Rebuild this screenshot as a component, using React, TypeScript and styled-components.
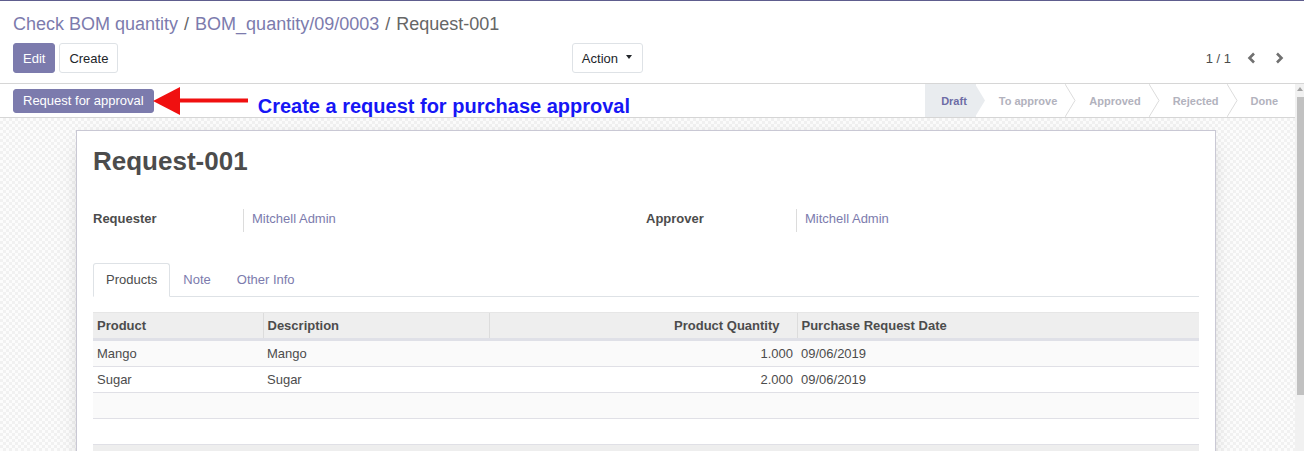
import React from "react";
import styled, { createGlobalStyle } from "styled-components";

const PRIMARY = "#7c7bad";
const TEXT = "#4c4c4c";

const GlobalStyle = createGlobalStyle`
  html, body, #root { height: 100%; margin: 0; padding: 0; }
  body {
    overflow: hidden;
    font-family: "Liberation Sans", Arial, Helvetica, sans-serif;
    font-size: 13px;
    color: ${TEXT};
    background: #fff;
  }
  * { box-sizing: border-box; }
`;

const Page = styled.div`
  height: 100vh;
  display: flex;
  flex-direction: column;
  border-top: 1px solid #5e5d8e;
`;

const ControlPanel = styled.div`
  flex: none;
  padding: 11px 0 10px;
  border-bottom: 1px solid #d6d6d6;
  background: #fff;
`;

const Breadcrumb = styled.ol`
  display: flex;
  margin: 0 0 7px;
  padding: 0 0 0 13px;
  list-style: none;
  font-size: 18px;
  line-height: 24px;
`;

const Crumb = styled.li<{ $active?: boolean }>`
  color: ${(p) => (p.$active ? "#666" : PRIMARY)};
  &:not(:first-child)::before {
    content: "/";
    color: #666;
    padding: 0 6px;
  }
`;

const ButtonsRow = styled.div`
  display: flex;
  height: 30px;
`;

const LeftHalf = styled.div`
  flex: 0 0 50%;
  display: flex;
  gap: 4px;
  padding: 0 9px 0 13px;
`;

const RightHalf = styled.div`
  flex: 1;
  display: flex;
  justify-content: flex-end;
  align-items: center;
  padding-right: 11px;
`;

const Btn = styled.button<{ $primary?: boolean; $push?: boolean }>`
  height: 30px;
  display: inline-flex;
  align-items: center;
  padding: 0 ${(p) => (p.$push ? "10px 0 9px" : "9px")};
  font-family: inherit;
  font-size: 13px;
  border-radius: 3px;
  border: 1px solid ${(p) => (p.$primary ? PRIMARY : "#dee2e6")};
  background: ${(p) => (p.$primary ? PRIMARY : "#fff")};
  color: ${(p) => (p.$primary ? "#fff" : "#212529")};
  margin-left: ${(p) => (p.$push ? "auto" : "0")};
  cursor: pointer;
`;

const Caret = styled.span`
  display: inline-block;
  margin-left: 8px;
  width: 0;
  height: 0;
  border-top: 4px solid #212529;
  border-left: 3.5px solid transparent;
  border-right: 3.5px solid transparent;
  margin-top: -3px;
`;

const PagerValue = styled.span`
  color: ${TEXT};
  font-size: 13px;
  margin-right: 6px;
`;

const PagerBtn = styled.span`
  width: 28px;
  height: 30px;
  display: flex;
  align-items: center;
  justify-content: center;
`;

const Body = styled.div`
  flex: 1;
  min-height: 0;
  display: flex;
`;

const Viewport = styled.div`
  flex: 1;
  min-width: 0;
  overflow: hidden;
`;

const ScrollTrack = styled.div`
  flex: 0 0 9px;
  display: flex;
  flex-direction: column;
  background: #f1f1f1;
`;

const ScrollUp = styled.div`
  height: 13px;
  display: flex;
  justify-content: center;
  padding-top: 3px;
  &::before {
    content: "";
    width: 0;
    height: 0;
    border-bottom: 4px solid #a3a3a3;
    border-left: 3px solid transparent;
    border-right: 3px solid transparent;
  }
`;

const ScrollThumb = styled.div`
  height: 298px;
  margin-left: 2px;
  background: #c1c1c1;
`;

const StatusBar = styled.div`
  display: flex;
  height: 34px;
  border-bottom: 1px solid #d6d6d6;
  background: #fff;
`;

const StatusButtons = styled.div`
  display: flex;
  align-items: center;
  padding-left: 13px;
`;

const ActionBtn = styled.button`
  height: 24px;
  padding: 0 9px;
  font-family: inherit;
  font-size: 13px;
  color: #fff;
  background: ${PRIMARY};
  border: 1px solid ${PRIMARY};
  border-radius: 3px;
`;

const Annotation = styled.span`
  align-self: flex-start;
  margin: 12px 0 0 9px;
  font-size: 20px;
  line-height: 20px;
  font-weight: bold;
  color: #1616f5;
  white-space: nowrap;
`;

const Steps = styled.div`
  display: flex;
  margin-left: auto;
`;

const Step = styled.div<{ $active?: boolean; $first?: boolean; $last?: boolean }>`
  position: relative;
  display: flex;
  align-items: center;
  padding: 0 ${(p) => (p.$last ? 17 : 9)}px 0 ${(p) => (p.$first ? 16 : 23)}px;
  font-size: 11px;
  font-weight: bold;
  color: ${(p) => (p.$active ? "#6e6da6" : "#b2b2bd")};
  background: ${(p) => (p.$active ? "#e9ecef" : "#fff")};
`;

const Chevron = styled.svg`
  position: absolute;
  top: 0;
  right: -10px;
  z-index: 1;
`;

const Content = styled.div`
  padding: 12px 3px 12px 0;
  background: repeating-conic-gradient(#f1f1f1 0 25%, #fcfcfc 0 50%) 0 0 / 6px 6px;
`;

const Sheet = styled.div`
  width: 1140px;
  margin: 0 auto;
  background: #fff;
  border: 1px solid #c9c8d4;
  box-shadow: 0 5px 20px -12px rgba(0, 0, 0, 0.5);
  padding: 15px 16px 16px;
`;

const Title = styled.h1`
  margin: 0;
  font-size: 26px;
  line-height: 31px;
  font-weight: bold;
  color: ${TEXT};
`;

const Groups = styled.div`
  display: grid;
  grid-template-columns: 1fr 1fr;
  margin-top: 32px;
`;

const Field = styled.div`
  display: flex;
`;

const Label = styled.div`
  width: 150px;
  font-weight: bold;
  line-height: 20px;
  padding-bottom: 3px;
  color: ${TEXT};
`;

const Value = styled.div`
  border-left: 1px solid #dcdcdc;
  padding: 0 0 3px 8px;
  line-height: 20px;
  color: ${PRIMARY};
`;

const Tabs = styled.div`
  display: flex;
  margin-top: 31px;
  border-bottom: 1px solid #dee2e6;
`;

const Tab = styled.div<{ $active?: boolean }>`
  padding: 6px 12px;
  line-height: 20px;
  margin-bottom: -1px;
  border: 1px solid transparent;
  border-radius: 3px 3px 0 0;
  color: ${(p) => (p.$active ? TEXT : PRIMARY)};
  background: ${(p) => (p.$active ? "#fff" : "transparent")};
  border-color: ${(p) => (p.$active ? "#dee2e6 #dee2e6 #fff" : "transparent")};
`;

const Table = styled.table`
  width: 100%;
  margin-top: 15px;
  border-collapse: collapse;
  table-layout: fixed;
`;

const Th = styled.th<{ $num?: boolean }>`
  background: #eee;
  font-weight: bold;
  text-align: ${(p) => (p.$num ? "right" : "left")};
  padding: 3px ${(p) => (p.$num ? 17 : 4)}px 2px 4px;
  line-height: 20px;
  border-top: 1px solid #e6e6e6;
  border-bottom: 3px solid #dfe0e7;
  color: ${TEXT};
  &:not(:first-child) { border-left: 1px solid #dcdcdc; }
`;

const Tr = styled.tr<{ $striped?: boolean }>`
  background: ${(p) => (p.$striped ? "#fafafa" : "#fff")};
`;

const Td = styled.td<{ $num?: boolean }>`
  padding: 3px 4px 2px;
  line-height: 20px;
  height: 26px;
  text-align: ${(p) => (p.$num ? "right" : "left")};
  border-bottom: 1px solid #e0e0e6;
  color: ${TEXT};
`;

const FootTd = styled.td`
  background: #eee;
  height: 26px;
`;

const ChevronIcon = ({ dir }: { dir: "left" | "right" }) => (
  <svg width="9" height="12" viewBox="0 0 9 12">
    <polyline
      points={dir === "left" ? "7,1.5 2.5,6 7,10.5" : "2,1.5 6.5,6 2,10.5"}
      fill="none"
      stroke="#707070"
      strokeWidth="2.6"
    />
  </svg>
);

const RedArrow = () => (
  <svg width="96" height="30" viewBox="0 0 96 30" style={{ marginLeft: -1 }}>
    <polygon points="0,15 27,1 27,29" fill="#f01010" />
    <rect x="26" y="12.5" width="69" height="4" fill="#f01010" />
  </svg>
);

const steps = ["Draft", "To approve", "Approved", "Rejected", "Done"];

const rows = [
  { product: "Mango", desc: "Mango", qty: "1.000", date: "09/06/2019" },
  { product: "Sugar", desc: "Sugar", qty: "2.000", date: "09/06/2019" },
];

export default function App() {
  return (
    <>
      <GlobalStyle />
      <Page>
        <ControlPanel>
          <Breadcrumb>
            <Crumb>Check BOM quantity</Crumb>
            <Crumb>BOM_quantity/09/0003</Crumb>
            <Crumb $active>Request-001</Crumb>
          </Breadcrumb>
          <ButtonsRow>
            <LeftHalf>
              <Btn $primary>Edit</Btn>
              <Btn>Create</Btn>
              <Btn $push>
                Action
                <Caret />
              </Btn>
            </LeftHalf>
            <RightHalf>
              <PagerValue>1 / 1</PagerValue>
              <PagerBtn>
                <ChevronIcon dir="left" />
              </PagerBtn>
              <PagerBtn>
                <ChevronIcon dir="right" />
              </PagerBtn>
            </RightHalf>
          </ButtonsRow>
        </ControlPanel>
        <Body>
          <Viewport>
            <StatusBar>
              <StatusButtons>
                <ActionBtn>Request for approval</ActionBtn>
                <RedArrow />
              </StatusButtons>
              <Annotation>Create a request for purchase approval</Annotation>
              <Steps>
                {steps.map((s, i) => {
                  const active = i === 0;
                  const last = i === steps.length - 1;
                  return (
                    <Step key={s} $active={active} $first={i === 0} $last={last}>
                      {s}
                      {!last && (
                        <Chevron width="11" height="33" viewBox="0 0 11 33">
                          <polygon
                            points="0,0 10,16.5 0,33"
                            fill={active ? "#e9ecef" : "#fff"}
                          />
                          {!active && (
                            <polyline
                              points="0,0 10,16.5 0,33"
                              fill="none"
                              stroke="#dcdcdc"
                              strokeWidth="1"
                            />
                          )}
                        </Chevron>
                      )}
                    </Step>
                  );
                })}
              </Steps>
            </StatusBar>
            <Content>
              <Sheet>
                <Title>Request-001</Title>
                <Groups>
                  <Field>
                    <Label>Requester</Label>
                    <Value>Mitchell Admin</Value>
                  </Field>
                  <Field>
                    <Label>Approver</Label>
                    <Value>Mitchell Admin</Value>
                  </Field>
                </Groups>
                <Tabs>
                  <Tab $active>Products</Tab>
                  <Tab>Note</Tab>
                  <Tab>Other Info</Tab>
                </Tabs>
                <Table>
                  <colgroup>
                    <col style={{ width: 170 }} />
                    <col style={{ width: 226 }} />
                    <col style={{ width: 308 }} />
                    <col />
                  </colgroup>
                  <thead>
                    <tr>
                      <Th>Product</Th>
                      <Th>Description</Th>
                      <Th $num>Product Quantity</Th>
                      <Th>Purchase Request Date</Th>
                    </tr>
                  </thead>
                  <tbody>
                    {rows.map((r, i) => (
                      <Tr key={r.product} $striped={i % 2 === 0}>
                        <Td>{r.product}</Td>
                        <Td>{r.desc}</Td>
                        <Td $num>{r.qty}</Td>
                        <Td>{r.date}</Td>
                      </Tr>
                    ))}
                    <Tr $striped>
                      <Td />
                      <Td />
                      <Td />
                      <Td />
                    </Tr>
                    <Tr>
                      <Td />
                      <Td />
                      <Td />
                      <Td />
                    </Tr>
                  </tbody>
                  <tfoot>
                    <tr>
                      <FootTd />
                      <FootTd />
                      <FootTd />
                      <FootTd />
                    </tr>
                  </tfoot>
                </Table>
              </Sheet>
            </Content>
          </Viewport>
          <ScrollTrack>
            <ScrollUp />
            <ScrollThumb />
          </ScrollTrack>
        </Body>
      </Page>
    </>
  );
}
